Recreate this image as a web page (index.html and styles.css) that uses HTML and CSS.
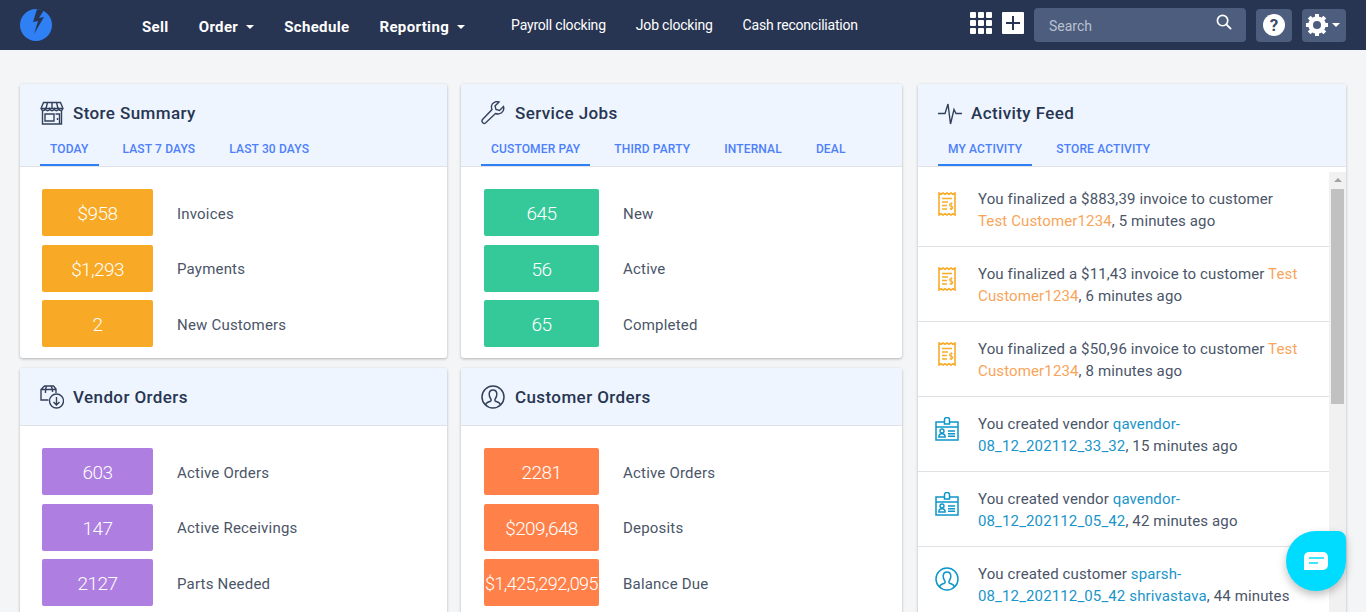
FILE: index.html
```html
<!DOCTYPE html>
<html>
<head>
<meta charset="utf-8">
<title>Dashboard</title>
<link rel="stylesheet" href="styles.css">
</head>
<body>

<svg class="defs" width="0" height="0">
 <symbol id="i-receipt" viewBox="0 0 18 24">
  <path d="M1 1l2 1.2L5 1l2 1.2L9 1l2 1.2L13 1l2 1.2L17 1v22l-2-1.2-2 1.2-2-1.2-2 1.2-2-1.2-2 1.2-2-1.2L1 23z" fill="none" stroke="currentColor" stroke-width="1.6"/>
  <path d="M4 6.5h10M4 10h6M4 13.500h5M4 17h5" fill="none" stroke="currentColor" stroke-width="1.5"/>
  <path d="M14.500 11.500h-1.600a1.200 1.200 0 0 0 0 2.700h.5a1.200 1.200 0 0 1 0 2.700h-1.800M13.200 10.300v7.800" fill="none" stroke="currentColor" stroke-width="1.100"/>
 </symbol>
 <symbol id="i-badge" viewBox="0 0 24 24">
  <path d="M9 5H1v18h22V5h-8M1 10h22" fill="none" stroke="currentColor" stroke-width="1.500"/>
  <path d="M9.500 7V2.500a2.500 2 0 0 1 5 0V7z" fill="none" stroke="currentColor" stroke-width="1.500"/>
  <circle cx="7" cy="14" r="2" fill="none" stroke="currentColor" stroke-width="1.400"/>
  <path d="M3.800 20c0-2.500 1.500-3.300 3.200-3.300s3.200.8 3.200 3.300zM13 14h7M13 16.700h7M13 19.300h7" fill="none" stroke="currentColor" stroke-width="1.400"/>
 </symbol>
 <symbol id="i-user" viewBox="0 0 24 24">
  <circle cx="12" cy="12" r="11" fill="none" stroke="currentColor" stroke-width="1.500"/>
  <path d="M4.500 20c.5-2.500 3-3 5-3.800.8-.4.800-1.600.2-2.400-1-1.200-1.500-2.800-1.500-4.500C8.200 6.800 9.800 5 12 5s3.800 1.800 3.800 4.300c0 1.700-.5 3.300-1.500 4.500-.6.800-.6 2 .2 2.400 2 .8 4.500 1.300 5 3.800" fill="none" stroke="currentColor" stroke-width="1.500"/>
 </symbol>
</svg>

<div class="topbar">
 <a class="logo" href="#">
  <svg width="32" height="32" viewBox="0 0 32 32"><circle cx="16" cy="16" r="16" fill="#2f80f5"/><path d="M17 0L13 13l5-1-4 13L24 8l-5 1 5-8z" fill="#283552"/></svg>
 </a>
 <div class="nav-main">
  <a href="#">Sell</a>
  <a href="#" class="has-caret">Order</a>
  <a href="#">Schedule</a>
  <a href="#" class="has-caret">Reporting</a>
 </div>
 <div class="nav-sub">
  <a href="#">Payroll clocking</a>
  <a href="#">Job clocking</a>
  <a href="#">Cash reconciliation</a>
 </div>
 <div class="nav-tools">
  <svg class="apps" width="22" height="22" viewBox="0 0 22 22" fill="#fff">
   <rect x="0" y="0" width="6" height="6" rx="1"/><rect x="8" y="0" width="6" height="6" rx="1"/><rect x="16" y="0" width="6" height="6" rx="1"/>
   <rect x="0" y="8" width="6" height="6" rx="1"/><rect x="8" y="8" width="6" height="6" rx="1"/><rect x="16" y="8" width="6" height="6" rx="1"/>
   <rect x="0" y="16" width="6" height="6" rx="1"/><rect x="8" y="16" width="6" height="6" rx="1"/><rect x="16" y="16" width="6" height="6" rx="1"/>
  </svg>
  <svg class="plus" width="22" height="22" viewBox="0 0 22 22"><rect width="22" height="22" rx="1" fill="#fff"/><path d="M11 4v14M4 11h14" stroke="#283552" stroke-width="2"/></svg>
  <div class="search">
   <span>Search</span>
   <svg width="16" height="16" viewBox="0 0 17 17"><circle cx="7" cy="7" r="5.500" fill="none" stroke="#fff" stroke-width="1.800"/><path d="M11 11l4.500 4.500" stroke="#fff" stroke-width="2" stroke-linecap="round"/></svg>
  </div>
  <div class="tool-btn help">
   <span class="help-dot">?</span>
  </div>
  <div class="tool-btn gear">
   <svg width="24" height="24" viewBox="0 0 24 24"><circle cx="12" cy="12" r="6.500" fill="none" stroke="#fff" stroke-width="4.500"/><path d="M12 1v22M1 12h22M4.200 4.200l15.600 15.600M19.800 4.200L4.200 19.800" stroke="#fff" stroke-width="4"/><circle cx="12" cy="12" r="4" fill="#4d5d7e"/></svg>
   <span class="caret"></span>
  </div>
 </div>
</div>

<div class="page">

 <div class="col col-a">
  <div class="card">
   <div class="card-head">
    <div class="card-title">
     <svg width="24" height="24" viewBox="0 0 24 24" fill="none" stroke="#33415c" stroke-width="1.400">
      <path d="M3.500 1.500h17l2.500 6a2.300 2.300 0 0 1-4.400.6 2.300 2.300 0 0 1-4.400 0 2.300 2.300 0 0 1-4.400 0 2.300 2.300 0 0 1-4.400 0A2.300 2.300 0 0 1 1 7.500zM1 7.500h22M7.500 1.500L6 7.500M12 1.500v6M16.500 1.500L18 7.500"/>
      <path d="M2.500 10v13h19V10M5 13h9v7H5zM15.500 13h4v10h-4M17.500 17v2"/>
     </svg>
     Store Summary
    </div>
    <div class="tabs">
     <a href="#" class="on">Today</a>
     <a href="#">Last 7 days</a>
     <a href="#">Last 30 days</a>
    </div>
   </div>
   <div class="stats">
    <div class="stat"><div class="tile amber">$958</div><span>Invoices</span></div>
    <div class="stat"><div class="tile amber">$1,293</div><span>Payments</span></div>
    <div class="stat"><div class="tile amber">2</div><span>New Customers</span></div>
   </div>
  </div>
  <div class="card">
   <div class="card-head">
    <div class="card-title">
     <svg width="24" height="24" viewBox="0 0 24 24" fill="none" stroke="#33415c" stroke-width="1.400">
      <path d="M8.500 15H1V4.500L4.500 1h9L16 4v4M1 4.500h15M6.500 1L5.500 4.500V8M11 1l1.500 3.500V7"/>
      <circle cx="16.500" cy="16" r="7"/>
      <path d="M16.500 12v8M13.500 17l3 3 3-3"/>
     </svg>
     Vendor Orders
    </div>
   </div>
   <div class="stats">
    <div class="stat"><div class="tile purple">603</div><span>Active Orders</span></div>
    <div class="stat"><div class="tile purple">147</div><span>Active Receivings</span></div>
    <div class="stat"><div class="tile purple">2127</div><span>Parts Needed</span></div>
   </div>
  </div>
 </div>

 <div class="col col-b">
  <div class="card">
   <div class="card-head">
    <div class="card-title">
     <svg width="24" height="24" viewBox="0 0 24 24" fill="none" stroke="#33415c" stroke-width="1.400">
      <path d="M22.500 5.500l-4 4-3.500-1-1-3.500 4-4c-3-1-7 .5-7.500 4-.2 1.500 0 2.500.5 3.500L1.500 18.500c-1.500 1.500.5 5 3 3.500l10-9.500c1 .4 2.200.6 3.500.4 3.500-.6 5.500-4 4.500-7.400z"/>
     </svg>
     Service Jobs
    </div>
    <div class="tabs">
     <a href="#" class="on">Customer Pay</a>
     <a href="#">Third Party</a>
     <a href="#">Internal</a>
     <a href="#">Deal</a>
    </div>
   </div>
   <div class="stats">
    <div class="stat"><div class="tile green">645</div><span>New</span></div>
    <div class="stat"><div class="tile green">56</div><span>Active</span></div>
    <div class="stat"><div class="tile green">65</div><span>Completed</span></div>
   </div>
  </div>
  <div class="card">
   <div class="card-head">
    <div class="card-title">
     <svg class="title-user" width="24" height="24"><use href="#i-user"/></svg>
     Customer Orders
    </div>
   </div>
   <div class="stats">
    <div class="stat"><div class="tile coral">2281</div><span>Active Orders</span></div>
    <div class="stat"><div class="tile coral">$209,648</div><span>Deposits</span></div>
    <div class="stat"><div class="tile coral long">$1,425,292,095</div><span>Balance Due</span></div>
   </div>
  </div>
 </div>

 <div class="col col-c">
  <div class="card feed">
   <div class="card-head">
    <div class="card-title">
     <svg width="24" height="24" viewBox="0 0 24 24" fill="none" stroke="#33415c" stroke-width="1.400">
      <path d="M0 12.500h7L10 3l2.500 20L16 8.500l2 4h6"/>
     </svg>
     Activity Feed
    </div>
    <div class="tabs">
     <a href="#" class="on">My Activity</a>
     <a href="#">Store Activity</a>
    </div>
   </div>
   <div class="feed-body">
    <div class="feed-list">
     <div class="item">
      <svg class="ico receipt"><use href="#i-receipt"/></svg>
      <p>You finalized a $883,39 invoice to customer<br><a href="#" class="lnk-o">Test Customer1234</a>, 5 minutes ago</p>
     </div>
     <div class="item">
      <svg class="ico receipt"><use href="#i-receipt"/></svg>
      <p>You finalized a $11,43 invoice to customer <a href="#" class="lnk-o">Test<br>Customer1234</a>, 6 minutes ago</p>
     </div>
     <div class="item">
      <svg class="ico receipt"><use href="#i-receipt"/></svg>
      <p>You finalized a $50,96 invoice to customer <a href="#" class="lnk-o">Test<br>Customer1234</a>, 8 minutes ago</p>
     </div>
     <div class="item">
      <svg class="ico blue"><use href="#i-badge"/></svg>
      <p>You created vendor <a href="#" class="lnk-b">qavendor-<br>08_12_202112_33_32</a>, 15 minutes ago</p>
     </div>
     <div class="item">
      <svg class="ico blue"><use href="#i-badge"/></svg>
      <p>You created vendor <a href="#" class="lnk-b">qavendor-<br>08_12_202112_05_42</a>, 42 minutes ago</p>
     </div>
     <div class="item">
      <svg class="ico blue"><use href="#i-user"/></svg>
      <p>You created customer <a href="#" class="lnk-b">sparsh-<br>08_12_202112_05_42 shrivastava</a>, 44 minutes</p>
     </div>
    </div>
    <div class="scrollbar">
     <span class="arrow"></span>
     <div class="thumb"></div>
    </div>
   </div>
  </div>
 </div>

</div>

<div class="chat">
 <svg width="24" height="18" viewBox="0 0 24 18"><path d="M5 0h14a5 5 0 0 1 5 5v8a5 5 0 0 1-5 5H0V5a5 5 0 0 1 5-5z" fill="#fff"/><path d="M5 6h15M5 11h9" stroke="#00dcff" stroke-width="1.500"/></svg>
</div>

</body>
</html>
```

FILE: styles.css
```css
html, body {
 margin: 0;
 height: 100%;
 overflow: hidden;
}
body {
 background: #f3f5f7;
 font-family: Roboto, "Liberation Sans", sans-serif;
 color: #4a5568;
}
a {
 text-decoration: none;
}
.defs {
 position: absolute;
}

/* top bar */
.topbar {
 display: flex;
 align-items: center;
 height: 50px;
 padding: 0 20px;
 background: #283552;
}
.logo {
 display: flex;
 width: 32px;
 height: 32px;
}
.nav-main {
 display: flex;
 gap: 30px;
 margin-left: 90px;
 margin-top: 3px;
}
.nav-main a {
 color: #fff;
 font-size: 15px;
 font-weight: 700;
 letter-spacing: .35px;
}
.has-caret:after {
 content: "";
 display: inline-block;
 margin-left: 8px;
 vertical-align: 3px;
 border: 4px solid transparent;
 border-top-color: #fff;
 border-bottom: 0;
}
.nav-sub {
 display: flex;
 gap: 30px;
 margin-left: 46px;
}
.nav-sub a {
 color: #fff;
 font-size: 14px;
 letter-spacing: -.2px;
}
.nav-tools {
 display: flex;
 align-items: center;
 margin-left: auto;
}
.apps, .plus {
 margin-bottom: 4px;
}
.plus {
 margin-left: 10px;
}
.search {
 display: flex;
 align-items: center;
 justify-content: space-between;
 box-sizing: border-box;
 width: 212px;
 height: 34px;
 margin-left: 10px;
 padding: 2px 14px 0 15px;
 background: #4d5d7e;
 border-radius: 4px;
 color: #b9c1d0;
 font-size: 14px;
}
.search svg {
 margin-top: -8px;
}
.tool-btn {
 display: flex;
 align-items: center;
 justify-content: center;
 height: 33px;
 background: #4d5d7e;
 border-radius: 4px;
}
.help {
 width: 36px;
 margin-left: 10px;
}
.help-dot {
 width: 22px;
 height: 22px;
 border-radius: 50%;
 background: #fff;
 color: #3b4a69;
 font-size: 17px;
 font-weight: 700;
 line-height: 22px;
 text-align: center;
}
.gear {
 width: 44px;
 margin-left: 10px;
 gap: 3px;
 justify-content: flex-start;
 padding-left: 3px;
 box-sizing: border-box;
}
.caret {
 border: 4px solid transparent;
 border-top-color: #fff;
 border-bottom: 0;
}

/* columns */
.page {
 display: flex;
 align-items: flex-start;
 padding: 34px 20px 0;
}
.col {
 display: flex;
 flex-direction: column;
 gap: 10px;
}
.col-a {
 width: 427px;
}
.col-b {
 width: 441px;
 margin-left: 14px;
}
.col-c {
 width: 428px;
 margin-left: 16px;
}

/* cards */
.card {
 background: #fff;
 border-radius: 3px;
 box-shadow: 0 1px 3px rgba(0, 0, 0, .28);
 overflow: hidden;
}
.card-head {
 padding: 17px 0 0;
 background: #eef5fe;
 border-bottom: 1px solid #dfe3e8;
}
.card-title {
 display: flex;
 align-items: center;
 gap: 9px;
 height: 24px;
 padding: 0 20px 16px;
 color: #283552;
 font-size: 17px;
 font-weight: 500;
 letter-spacing: .4px;
}
.col-b .card-title {
 gap: 10px;
}
.title-user {
 color: #33415c;
}
.tabs {
 display: flex;
 gap: 14px;
 margin-top: -3px;
 padding: 0 20px;
}
.tabs a {
 padding: 2px 10px 6px;
 border-bottom: 2px solid transparent;
 color: #4d7ffb;
 font-size: 12px;
 font-weight: 500;
 line-height: 18px;
 letter-spacing: .15px;
 text-transform: uppercase;
}
.tabs a.on {
 border-bottom-color: #2f80f5;
}

/* stat rows */
.stats {
 display: flex;
 flex-direction: column;
 gap: 8.500px;
 padding: 22px 22px 11px;
}
.col-b .stats {
 padding-left: 23px;
}
.stat {
 display: flex;
 align-items: center;
 gap: 24px;
 font-size: 15px;
 letter-spacing: .2px;
}
.stat span {
 padding-top: 2px;
}
.tile {
 flex: none;
 width: 111px;
 height: 47px;
 border-radius: 2px;
 color: #fff;
 font-size: 19px;
 font-weight: 300;
 line-height: 49px;
 letter-spacing: -.6px;
 text-align: center;
 white-space: nowrap;
 overflow: hidden;
}
.col-b .tile {
 width: 115px;
}
.tile.long {
 font-size: 18px;
 letter-spacing: -.5px;
}
.amber { background: #f8a925; }
.green { background: #35c99a; }
.purple { background: #ae7ee0; }
.coral { background: #ff8149; }

/* activity feed */
.feed {
 height: 540px;
}
.feed-body {
 display: flex;
 padding-top: 5px;
}
.feed-list {
 flex: 1;
}
.item {
 display: flex;
 gap: 19px;
 height: 74px;
 padding-left: 17px;
 border-bottom: 1px solid #dfe1e4;
}
.item p {
 margin: 16px 0 0;
 font-size: 15px;
 line-height: 22px;
 letter-spacing: .13px;
 white-space: nowrap;
}
.ico {
 flex: none;
 width: 24px;
 height: 24px;
 margin-top: 20px;
}
.receipt {
 color: #f8ac2a;
}
.blue {
 color: #0d96c9;
}
.lnk-o {
 color: #f8a55b;
}
.lnk-b {
 color: #1a95c9;
}
.scrollbar {
 flex: none;
 position: relative;
 width: 17px;
 height: 440px;
 background: #f1f1f1;
}
.arrow {
 position: absolute;
 top: 6px;
 left: 5px;
 border: 4px solid transparent;
 border-bottom-color: #a3a3a3;
 border-top: 0;
}
.thumb {
 position: absolute;
 top: 17px;
 left: 2px;
 width: 13px;
 height: 215px;
 background: #c1c1c1;
}

/* chat bubble */
.chat {
 position: fixed;
 top: 531px;
 left: 1286px;
 display: flex;
 align-items: center;
 justify-content: center;
 width: 60px;
 height: 60px;
 background: #00dcff;
 border-radius: 50% 8px 50% 50%;
 box-shadow: 0 4px 8px rgba(0, 0, 0, .25);
}
```
